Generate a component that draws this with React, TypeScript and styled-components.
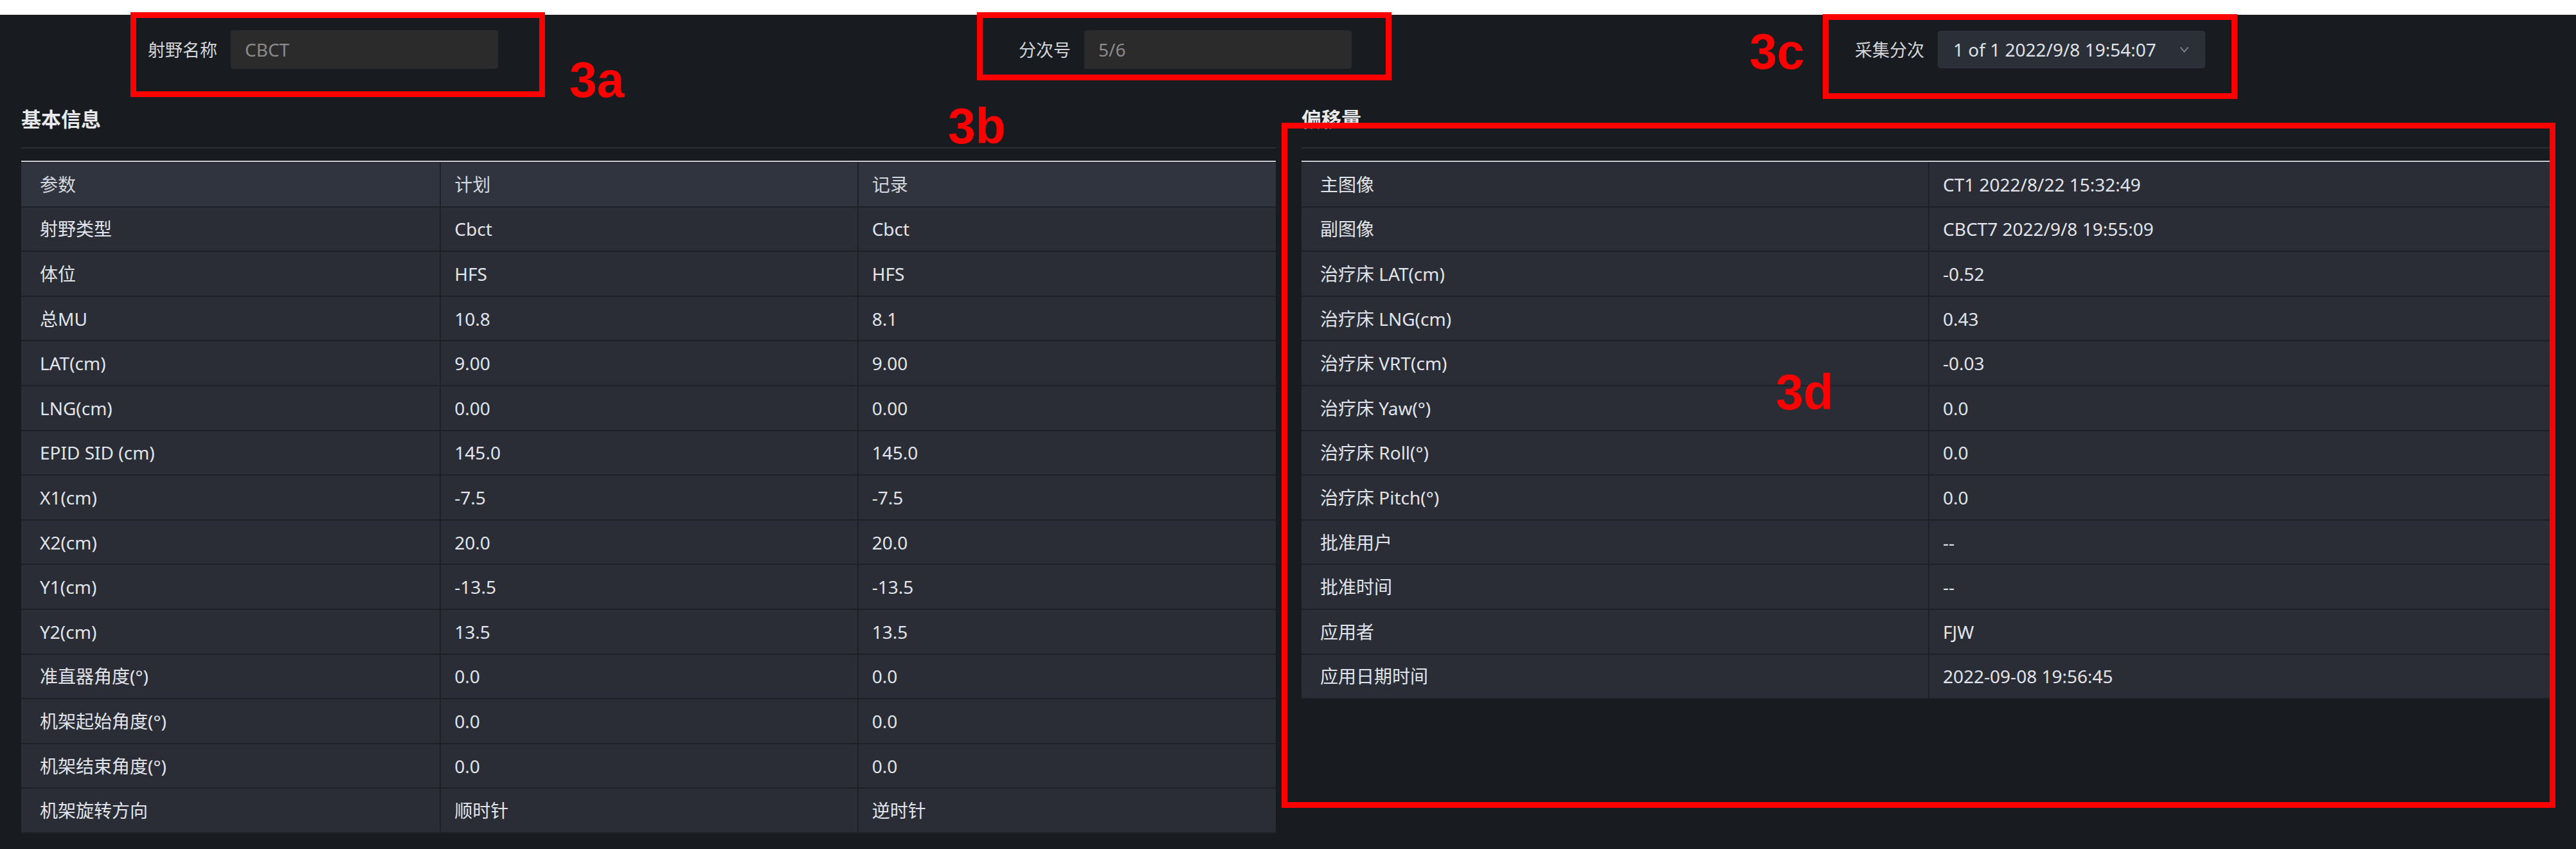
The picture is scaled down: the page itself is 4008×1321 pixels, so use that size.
import React from "react";
import styled, { createGlobalStyle } from "styled-components";

const GlobalStyle = createGlobalStyle`
  html, body {
    margin: 0;
    padding: 0;
    background: #ffffff;
  }
  body {
    font-family: "Noto Sans", "Noto Sans CJK SC", sans-serif;
  }
  * {
    box-sizing: border-box;
  }
`;

const Root = styled.div`
  position: relative;
  width: 4008px;
  padding-top: 23px;
  background: #ffffff;
`;

const Page = styled.div`
  background: #181b1f;
  height: 1298px;
  overflow: hidden;
`;

const FormRow = styled.div`
  display: grid;
  grid-template-columns: repeat(3, 1328px);
  padding: 24px 0 0 31px;
`;

const FormItem = styled.div`
  display: flex;
  align-items: center;
  gap: 21px;
  height: 60px;
`;

const FieldLabel = styled.label`
  width: 307px;
  text-align: right;
  font-size: 27px;
  line-height: 1;
  color: #d3d5d9;
`;

const TextField = styled.div`
  width: 416px;
  height: 60px;
  display: flex;
  align-items: center;
  padding-left: 22px;
  background: #2b2b2b;
  border-radius: 4px;
  font-size: 28px;
  color: #8b8b8b;
`;

const SelectField = styled.div`
  width: 416px;
  height: 58px;
  display: flex;
  align-items: center;
  justify-content: space-between;
  padding: 0 24px 0 23px;
  background: #2b2f38;
  border: 1px solid #31353e;
  border-radius: 4px;
  font-size: 28px;
  color: #dfe2e8;
`;

const Chevron = styled.svg`
  width: 15px;
  height: 10px;
  display: block;
`;

const Panels = styled.div`
  display: flex;
  gap: 40px;
  padding: 58px 40px 0 33px;
`;

const Panel = styled.section<{ $width?: number }>`
  flex: ${(p) => (p.$width ? `0 0 ${p.$width}px` : "1 1 0")};
  min-width: 0;
`;

const PanelHeader = styled.div`
  padding-bottom: 24px;
  border-bottom: 2px solid #2c2f35;
`;

const PanelTitle = styled.h3`
  margin: 0;
  height: 40px;
  line-height: 40px;
  font-size: 31px;
  font-weight: 700;
  color: #e7e9ed;
`;

const Table = styled.div`
  margin-top: 19px;
  border-top: 2px solid #c9ccd2;
  padding-top: 1px;
`;

const Row = styled.div<{ $cols: string; $head?: boolean }>`
  display: grid;
  grid-template-columns: ${(p) => p.$cols};
  height: 69.6px;
  background: ${(p) => (p.$head ? "#30343e" : "#2a2d35")};
  border-bottom: 2px solid #1d2025;
`;

const Cell = styled.div<{ $first?: boolean; $head?: boolean }>`
  display: flex;
  align-items: center;
  padding-left: ${(p) => (p.$first ? "29px" : "21px")};
  border-left: ${(p) => (p.$first ? "none" : "2px solid #1d2025")};
  font-size: 28px;
  line-height: 1;
  white-space: nowrap;
  color: ${(p) => (p.$head ? "#d4d7dd" : "#e1e4ea")};
`;

const AnnoBox = styled.div<{ $x: number; $y: number; $w: number; $h: number }>`
  position: absolute;
  left: ${(p) => p.$x}px;
  top: ${(p) => p.$y}px;
  width: ${(p) => p.$w}px;
  height: ${(p) => p.$h}px;
  border: 9px solid #ff0000;
  pointer-events: none;
`;

const AnnoLabel = styled.span<{ $x: number; $y: number }>`
  position: absolute;
  left: ${(p) => p.$x}px;
  top: ${(p) => p.$y}px;
  font-family: "Liberation Sans", Arial, sans-serif;
  font-size: 77px;
  font-weight: 700;
  line-height: 1;
  color: #ff0000;
  pointer-events: none;
`;

const basicRows: [string, string, string][] = [
  ["射野类型", "Cbct", "Cbct"],
  ["体位", "HFS", "HFS"],
  ["总MU", "10.8", "8.1"],
  ["LAT(cm)", "9.00", "9.00"],
  ["LNG(cm)", "0.00", "0.00"],
  ["EPID SID (cm)", "145.0", "145.0"],
  ["X1(cm)", "-7.5", "-7.5"],
  ["X2(cm)", "20.0", "20.0"],
  ["Y1(cm)", "-13.5", "-13.5"],
  ["Y2(cm)", "13.5", "13.5"],
  ["准直器角度(°)", "0.0", "0.0"],
  ["机架起始角度(°)", "0.0", "0.0"],
  ["机架结束角度(°)", "0.0", "0.0"],
  ["机架旋转方向", "顺时针", "逆时针"],
];

const offsetRows: [string, string][] = [
  ["主图像", "CT1 2022/8/22 15:32:49"],
  ["副图像", "CBCT7 2022/9/8 19:55:09"],
  ["治疗床 LAT(cm)", "-0.52"],
  ["治疗床 LNG(cm)", "0.43"],
  ["治疗床 VRT(cm)", "-0.03"],
  ["治疗床 Yaw(°)", "0.0"],
  ["治疗床 Roll(°)", "0.0"],
  ["治疗床 Pitch(°)", "0.0"],
  ["批准用户", "--"],
  ["批准时间", "--"],
  ["应用者", "FJW"],
  ["应用日期时间", "2022-09-08 19:56:45"],
];

const BASIC_COLS = "651fr 649fr 651fr";
const OFFSET_COLS = "974fr 967fr";

export default function App() {
  return (
    <Root>
      <GlobalStyle />
      <Page>
        <FormRow>
          <FormItem>
            <FieldLabel>射野名称</FieldLabel>
            <TextField>CBCT</TextField>
          </FormItem>
          <FormItem>
            <FieldLabel>分次号</FieldLabel>
            <TextField>5/6</TextField>
          </FormItem>
          <FormItem>
            <FieldLabel>采集分次</FieldLabel>
            <SelectField>
              <span>1 of 1 2022/9/8 19:54:07</span>
              <Chevron viewBox="0 0 15 10">
                <polyline
                  points="1.5,1.5 7.5,8.5 13.5,1.5"
                  fill="none"
                  stroke="#858991"
                  strokeWidth="1.8"
                />
              </Chevron>
            </SelectField>
          </FormItem>
        </FormRow>

        <Panels>
          <Panel $width={1952}>
            <PanelHeader>
              <PanelTitle>基本信息</PanelTitle>
            </PanelHeader>
            <Table>
              <Row $cols={BASIC_COLS} $head>
                <Cell $first $head>参数</Cell>
                <Cell $head>计划</Cell>
                <Cell $head>记录</Cell>
              </Row>
              {basicRows.map(([a, b, c]) => (
                <Row key={a} $cols={BASIC_COLS}>
                  <Cell $first>{a}</Cell>
                  <Cell>{b}</Cell>
                  <Cell>{c}</Cell>
                </Row>
              ))}
            </Table>
          </Panel>
          <Panel>
            <PanelHeader>
              <PanelTitle>偏移量</PanelTitle>
            </PanelHeader>
            <Table>
              {offsetRows.map(([a, b]) => (
                <Row key={a} $cols={OFFSET_COLS}>
                  <Cell $first>{a}</Cell>
                  <Cell>{b}</Cell>
                </Row>
              ))}
            </Table>
          </Panel>
        </Panels>
      </Page>

      <AnnoBox $x={203} $y={19} $w={645} $h={132} />
      <AnnoBox $x={1520} $y={19} $w={645} $h={106} />
      <AnnoBox $x={2836} $y={22} $w={645} $h={132} />
      <AnnoBox $x={1994} $y={191} $w={1982} $h={1066} />
      <AnnoLabel $x={886} $y={86}>3a</AnnoLabel>
      <AnnoLabel $x={1475} $y={158}>3b</AnnoLabel>
      <AnnoLabel $x={2722} $y={42}>3c</AnnoLabel>
      <AnnoLabel $x={2763} $y={572}>3d</AnnoLabel>
    </Root>
  );
}
